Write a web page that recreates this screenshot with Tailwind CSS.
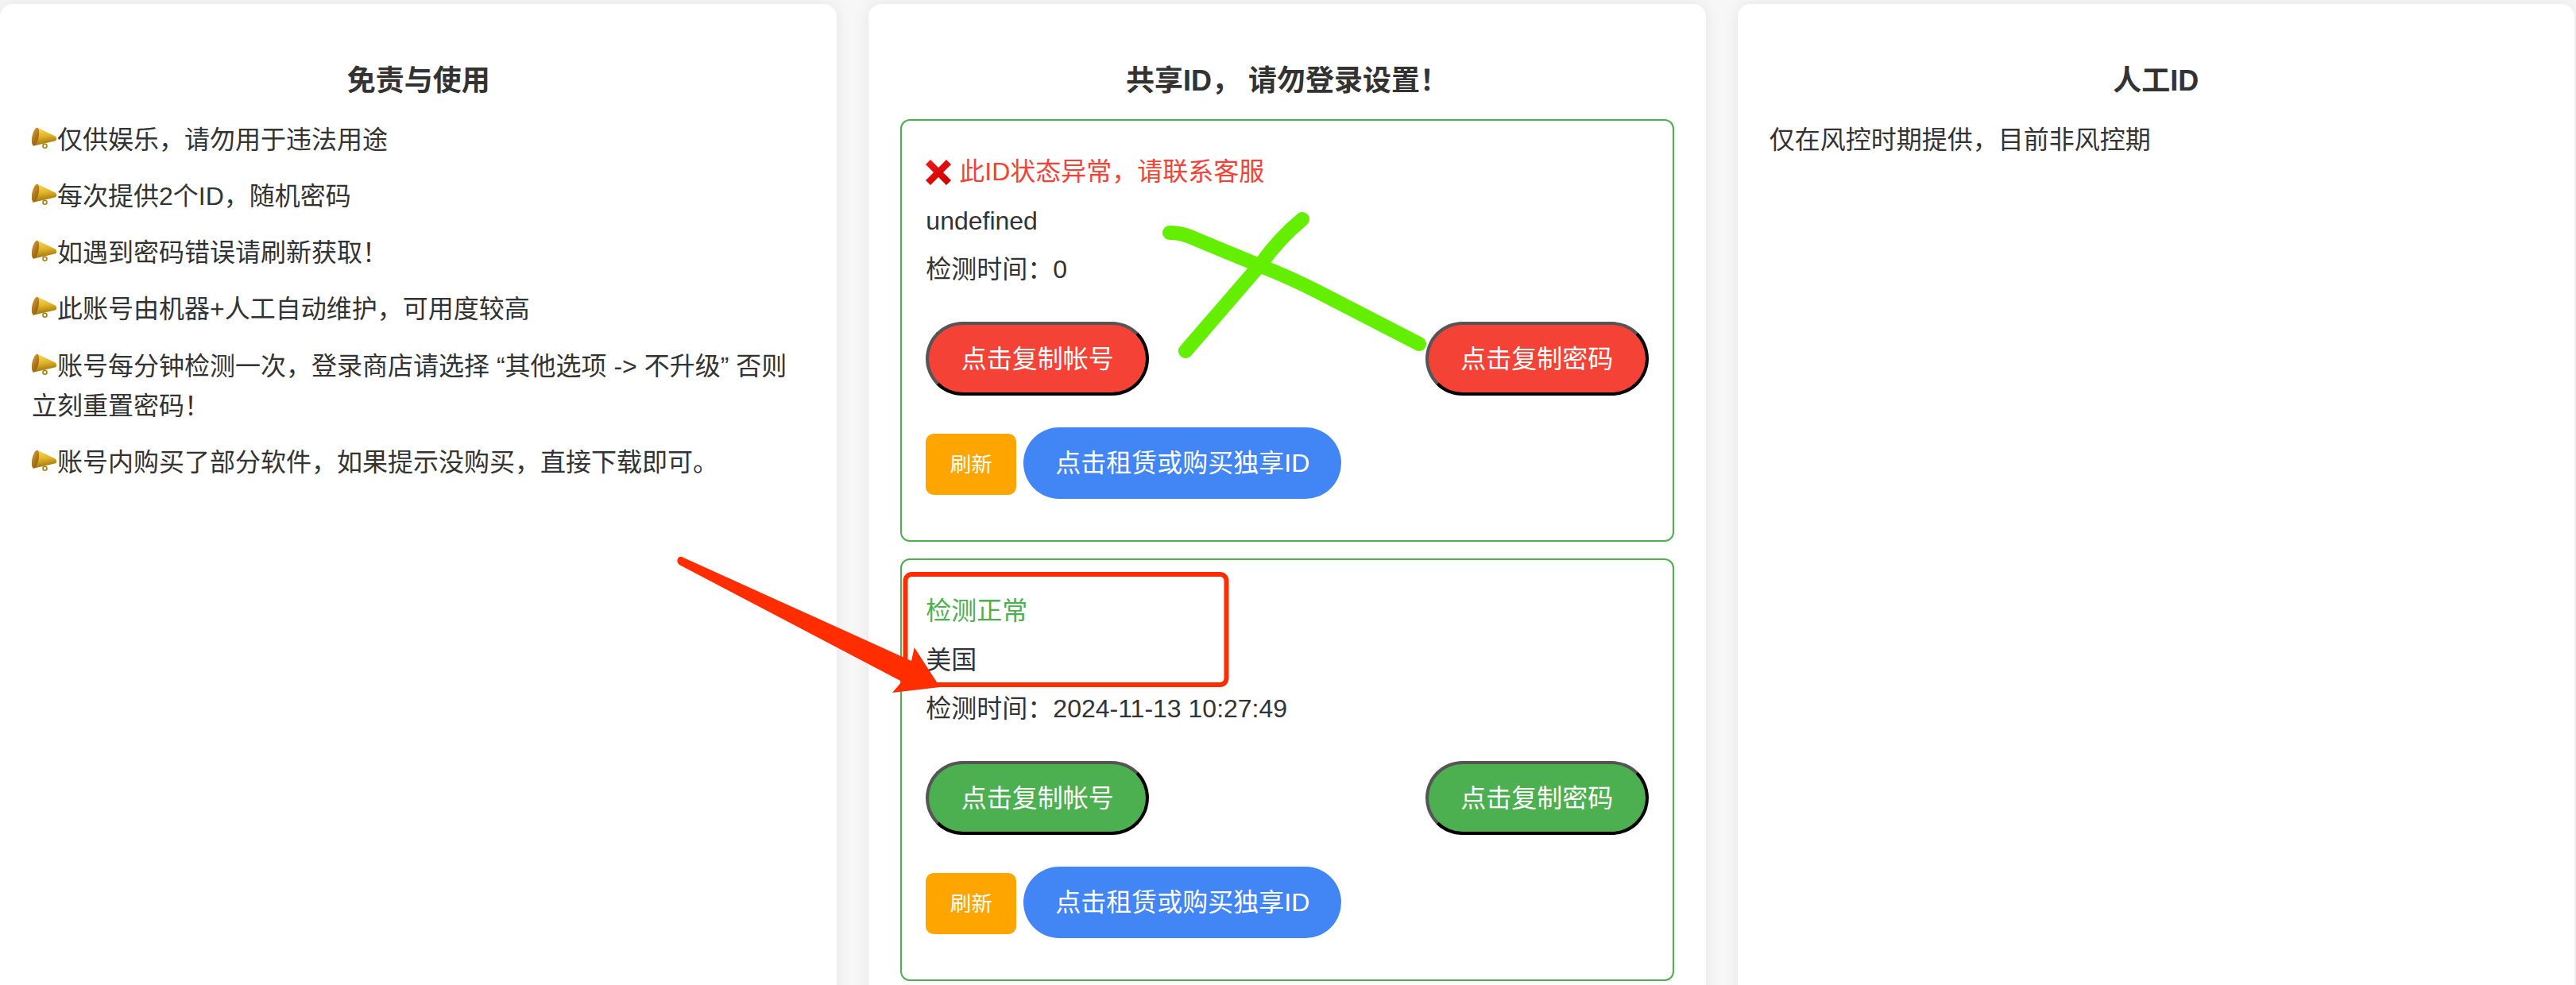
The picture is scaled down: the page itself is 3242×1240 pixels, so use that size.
<!doctype html>
<html lang="zh-CN">
<head>
<meta charset="utf-8">
<script src="https://cdn.jsdelivr.net/npm/@tailwindcss/browser@4"></script>
</head>
<body class="bg-[#f7f7f7] font-['Liberation_Sans','Noto_Sans_CJK_SC',sans-serif] text-[#333] text-[32px] leading-[49px]">
<svg class="absolute w-0 h-0" aria-hidden="true">
  <defs>
    <linearGradient id="gold" x1="0.2" y1="0" x2="0.4" y2="1">
      <stop offset="0" stop-color="#f7dc62"/><stop offset="0.5" stop-color="#e3b428"/><stop offset="1" stop-color="#96700c"/>
    </linearGradient>
    <linearGradient id="mouth" x1="0" y1="0" x2="1" y2="1">
      <stop offset="0" stop-color="#d99a2e"/><stop offset="1" stop-color="#8a5a10"/>
    </linearGradient>
    <linearGradient id="xred" x1="0" y1="0" x2="1" y2="1">
      <stop offset="0" stop-color="#f01818"/><stop offset="1" stop-color="#c80000"/>
    </linearGradient>
    <symbol id="horn" viewBox="0 0 33 28">
      <circle cx="17" cy="24" r="2.6" fill="none" stroke="#a97c12" stroke-width="1.6"/>
      <path d="M7 0 L30.5 11.4 Q33.6 14.4 31 17.4 L2 24 Z" fill="url(#gold)"/>
      <ellipse cx="4.6" cy="12" rx="4.2" ry="12" transform="rotate(12 4.6 12)" fill="url(#mouth)"/>
    </symbol>
  </defs>
</svg>

<div class="h-[1240px] overflow-hidden pt-[5px] pr-[2px]">
  <div class="flex gap-[40px] min-h-[1300px]">

    <section class="flex-1 bg-white rounded-[16px] shadow-[0_0_20px_rgba(0,0,0,0.08)] px-[40px] pt-[72px]">
      <h3 class="text-[36px] leading-[49px] font-bold text-center mb-[24.5px]">免责与使用</h3>
      <p class="leading-[50px] mb-[21.3px]"><svg class="inline-block w-[32px] h-[28px] align-[-1px]"><use href="#horn"/></svg>仅供娱乐，请勿用于违法用途</p>
      <p class="leading-[50px] mb-[21.3px]"><svg class="inline-block w-[32px] h-[28px] align-[-1px]"><use href="#horn"/></svg>每次提供2个ID，随机密码</p>
      <p class="leading-[50px] mb-[21.3px]"><svg class="inline-block w-[32px] h-[28px] align-[-1px]"><use href="#horn"/></svg>如遇到密码错误请刷新获取！</p>
      <p class="leading-[50px] mb-[21.3px]"><svg class="inline-block w-[32px] h-[28px] align-[-1px]"><use href="#horn"/></svg>此账号由机器+人工自动维护，可用度较高</p>
      <p class="leading-[50px] mb-[21.3px]"><svg class="inline-block w-[32px] h-[28px] align-[-1px]"><use href="#horn"/></svg>账号每分钟检测一次，登录商店请选择 “其他选项 -&gt; 不升级” 否则立刻重置密码！</p>
      <p class="leading-[50px] mb-[21.3px]"><svg class="inline-block w-[32px] h-[28px] align-[-1px]"><use href="#horn"/></svg>账号内购买了部分软件，如果提示没购买，直接下载即可。</p>
    </section>

    <section class="flex-1 bg-white rounded-[16px] shadow-[0_0_20px_rgba(0,0,0,0.08)] px-[40px] pt-[72px]">
      <h3 class="text-[36px] leading-[49px] font-bold text-center mb-[24px]">共享ID， 请勿登录设置！</h3>

      <div class="border-2 border-[#4caf50] rounded-[12px] px-[30px] pt-[40px] pb-[52px] mb-[21px]">
        <p class="text-[#f44336] mb-[12.5px] flex items-center gap-[10px]"><svg class="w-[32px] h-[32px]" viewBox="0 0 32 32"><path d="M6 0 L16 10 L26 0 L32 6 L22 16 L32 26 L26 32 L16 22 L6 32 L0 26 L10 16 L0 6 Z" fill="url(#xred)"/></svg><span>此ID状态异常，请联系客服</span></p>
        <p class="mb-[12.5px]">undefined</p>
        <p>检测时间：0</p>
        <div class="flex justify-between mt-[41px]">
          <button class="h-[93px] w-[281px] pt-[2px] rounded-full bg-[#f44336] text-white border-[4px] border-t-[#555] border-l-[#555] border-r-black border-b-black">点击复制帐号</button>
          <button class="h-[93px] w-[281px] pt-[2px] rounded-full bg-[#f44336] text-white border-[4px] border-t-[#555] border-l-[#555] border-r-black border-b-black">点击复制密码</button>
        </div>
        <div class="flex items-center gap-[9px] mt-[40px]">
          <button class="h-[77px] w-[114px] mt-[3px] pt-[2px] rounded-[10px] bg-[#ffa500] text-white text-[26.67px]">刷新</button>
          <button class="h-[90px] w-[400px] rounded-full bg-[#4285f4] text-white">点击租赁或购买独享ID</button>
        </div>
      </div>

      <div class="border-2 border-[#4caf50] rounded-[12px] px-[30px] pt-[40px] pb-[52px]">
        <p class="text-[#4caf50] mb-[12.5px]">检测正常</p>
        <p class="mb-[12.5px]">美国</p>
        <p>检测时间：2024-11-13 10:27:49</p>
        <div class="flex justify-between mt-[41px]">
          <button class="h-[93px] w-[281px] pt-[2px] rounded-full bg-[#4caf50] text-white border-[4px] border-t-[#555] border-l-[#555] border-r-black border-b-black">点击复制帐号</button>
          <button class="h-[93px] w-[281px] pt-[2px] rounded-full bg-[#4caf50] text-white border-[4px] border-t-[#555] border-l-[#555] border-r-black border-b-black">点击复制密码</button>
        </div>
        <div class="flex items-center gap-[9px] mt-[40px]">
          <button class="h-[77px] w-[114px] mt-[3px] pt-[2px] rounded-[10px] bg-[#ffa500] text-white text-[26.67px]">刷新</button>
          <button class="h-[90px] w-[400px] rounded-full bg-[#4285f4] text-white">点击租赁或购买独享ID</button>
        </div>
      </div>
    </section>

    <section class="flex-1 bg-white rounded-[16px] shadow-[0_0_20px_rgba(0,0,0,0.08)] px-[40px] pt-[72px]">
      <h3 class="text-[36px] leading-[49px] font-bold text-center mb-[24.5px]">人工ID</h3>
      <p class="leading-[50px]">仅在风控时期提供，目前非风控期</p>
    </section>
  </div>
</div>

<!-- hand-drawn annotations lying over the page -->
<svg class="absolute left-0 top-0 w-[3242px] h-[1240px] pointer-events-none" viewBox="0 0 3242 1240" fill="none">
  <path d="M1472 293 Q1484 293 1495 297 L1587 335 Q1625 350 1660 368 L1786 433" stroke="#64ee00" stroke-width="18" stroke-linecap="round"/>
  <path d="M1639 276 Q1610 300 1587 332 L1492 442" stroke="#64ee00" stroke-width="18" stroke-linecap="round"/>
  <rect x="1139.5" y="723" width="404" height="139" rx="8" stroke="#ff2d00" stroke-width="6"/>
  <path d="M858 701 Q855 700 853 703 Q851 708 855 711 L1135 858 L1123 872 L1183 865 L1150.7 815 L1147 832 Z" fill="#ff2d00"/>
</svg>
</body>
</html>
